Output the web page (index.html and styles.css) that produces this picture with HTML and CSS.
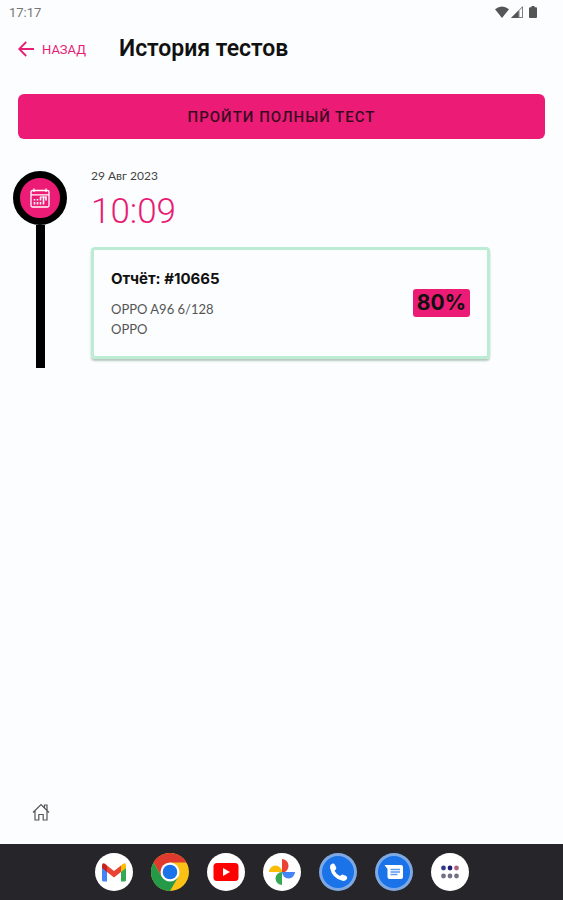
FILE: index.html
```
<!DOCTYPE html>
<html lang="ru">
<head>
  <meta charset="UTF-8" />
  <meta name="viewport" content="width=device-width, initial-scale=1" />
  <title>История тестов</title>
  <link rel="stylesheet" href="styles.css">
</head>
<body>

  <!-- Status bar -->
  <div class="status-bar">
    <span>17:17</span>
    <div class="status-icons">
      <svg width="14" height="12" viewBox="0 0 14 12"><path d="M0 3.2Q7-2.4 14 3.2L7 12z" fill="#555"/></svg>
      <svg width="12" height="12" viewBox="0 0 12 12"><path d="M0 12L12 0v12z" fill="#aaa"/><path d="M0 12L7.500 4.500V12z" fill="#555"/><path d="M8 11.500V4.500l3.500-3.700v10.700z" fill="#fbfcfe" stroke="#666" stroke-width=".8"/></svg>
      <svg class="battery" width="8" height="12" viewBox="0 0 8 12"><path d="M2.500 0h3v1.200H7q1 0 1 1V11q0 1-1 1H1q-1 0-1-1V2.200q0-1 1-1h1.500z" fill="#555"/></svg>
    </div>
  </div>

  <header class="header">
    <a class="back" href="#">
      <svg width="16" height="16" viewBox="0 0 16 16" fill="none" stroke="#e81c74" stroke-width="1.800"><path d="M16 8H1.500M8.200 1L1.200 8l7 7"/></svg>
      НАЗАД
    </a>
    <h1>История тестов</h1>
  </header>

  <main class="content">
    <button class="full-test" type="button">ПРОЙТИ ПОЛНЫЙ ТЕСТ</button>

    <!-- Timeline -->
    <section class="entry">
      <div class="marker">
        <div class="circle">
          <svg width="20" height="20" viewBox="0 0 20 20" fill="none" stroke="#fff" stroke-width="1.300">
            <rect x="1" y="2.500" width="18" height="16.500" rx="1.500"/>
            <path d="M1 6.800h18M4 .5v3.500M16 .5v3.500"/>
            <path d="M4.500 11v1.600M4.500 14v2.400M7.500 11v1.600M7.500 14v2.400M10.500 9v3.600M10.500 14v2.400M13.500 8.500v8M16 8.500v4" stroke-width="1.600"/>
            <path d="M10 9h6.500" stroke-width="1"/>
          </svg>
        </div>
        <div class="line"></div>
      </div>
      <div class="details">
        <p class="date">29 Авг 2023</p>
        <p class="time">10:09</p>
        <article class="card">
          <div>
            <h2>Отчёт: #10665</h2>
            <p>OPPO A96 6/128</p>
            <p>OPPO</p>
          </div>
          <span class="score">80%</span>
        </article>
      </div>
    </section>
  </main>

  <nav class="tabs">
    <a href="#" aria-label="Главная">
      <svg width="18" height="18" viewBox="0 0 18 18" fill="none" stroke="#555" stroke-width="1.200"><path d="M1 9.500L9 1.500l8 8M12.500 4.800V2h2.500v5.200M3 8v9h3.800v-5.500h4.400V17H15V8"/></svg>
    </a>
  </nav>

  <!-- App dock -->
  <footer class="dock">
    <button type="button" aria-label="Gmail">
      <svg viewBox="0 0 38 38">
        <circle cx="19" cy="19" r="19" fill="#fff"/>
        <path d="M7 13v14q0 1.500 1.500 1.500H12V16z" fill="#4285f4"/>
        <path d="M31 13v14q0 1.500-1.500 1.500H26V16z" fill="#34a853"/>
        <path d="M26 12.500l2-1.700q3-1.500 3 2V15l-5 4z" fill="#fbbc04"/>
        <path d="M7 15v-2.200q0-3.500 3-2l2 1.700V19z" fill="#c5221f"/>
        <path d="M12 12.500l7 5.500 7-5.500V19l-7 5.500L12 19z" fill="#ea4335"/>
      </svg>
    </button>
    <button type="button" aria-label="Chrome">
      <svg viewBox="0 0 38 38">
        <circle cx="19" cy="19" r="19" fill="#fbc116"/>
        <path d="M2.550 9.500A19 19 0 0 1 35.450 9.500H19L10.770 23.750z" fill="#df3a2d"/>
        <path d="M2.550 9.500A19 19 0 0 0 19 38l8.230-14.250H10.770z" fill="#249a48"/>
        <circle cx="19" cy="19" r="9.500" fill="#fff"/>
        <circle cx="19" cy="19" r="7.300" fill="#1a73e8"/>
      </svg>
    </button>
    <button type="button" aria-label="YouTube">
      <svg viewBox="0 0 38 38">
        <circle cx="19" cy="19" r="19" fill="#fff"/>
        <rect x="6.500" y="10" width="25" height="18" rx="3.500" fill="#f00"/>
        <path d="M16 15v8l7-4z" fill="#fff"/>
      </svg>
    </button>
    <button type="button" aria-label="Google Фото">
      <svg viewBox="0 0 38 38">
        <circle cx="19" cy="19" r="19" fill="#fff"/>
        <path d="M19 19V6a6.500 6.500 0 0 1 6.500 6.500q0 4-3.500 6.500z" fill="#ea4335"/>
        <path d="M19 19h13a6.500 6.500 0 0 1-13 0z" fill="#4285f4"/>
        <path d="M19 19v13a6.500 6.500 0 0 1 0-13z" fill="#34a853"/>
        <path d="M19 19H6a6.500 6.500 0 0 1 13 0z" fill="#fbbc04"/>
      </svg>
    </button>
    <button type="button" aria-label="Телефон">
      <svg viewBox="0 0 38 38">
        <circle cx="19" cy="19" r="19" fill="#7fa9e2"/>
        <circle cx="19" cy="19" r="16" fill="#1a73e8"/>
        <path d="M12 11.500q2.500-2 4 .5l1.300 2.800q.4 1.400-1.800 3 2 4 5.500 5.300 1.800-2 3.200-1.400l3 1.300q1.800 1.300.3 3.500-1.500 1.800-4 1.300-10.500-2.500-12.500-13-.2-2.200 1-3.300z" fill="#fff"/>
      </svg>
    </button>
    <button type="button" aria-label="Сообщения">
      <svg viewBox="0 0 38 38">
        <circle cx="19" cy="19" r="19" fill="#7fa9e2"/>
        <circle cx="19" cy="19" r="16" fill="#1a73e8"/>
        <path d="M9.500 12H26q2 0 2 2v10q0 2-2 2H14.500q-2 0-2-2v-8z" fill="#fff"/>
        <path d="M15.500 16.500h9.500M15.500 19h9.500M15.500 21.500h7" stroke="#5b9bef" stroke-width="1.300"/>
      </svg>
    </button>
    <button type="button" aria-label="Все приложения">
      <svg viewBox="0 0 38 38">
        <circle cx="19" cy="19" r="19" fill="#fff"/>
        <g fill="#757083">
          <circle cx="12.500" cy="15" r="2.400" fill="#343a8b"/>
          <circle cx="19" cy="15" r="2.400" fill="#211b78"/>
          <circle cx="25.500" cy="15" r="2.400" fill="#aa6380"/>
          <circle cx="12.500" cy="23" r="2.400"/>
          <circle cx="19" cy="23" r="2.400"/>
          <circle cx="25.500" cy="23" r="2.400"/>
        </g>
      </svg>
    </button>
  </footer>

</body>
</html>
```
FILE: styles.css
```
/* Base */
* {
  box-sizing: border-box;
}
body {
  margin: 0;
  min-height: 100vh;
  display: flex;
  flex-direction: column;
  font-family: Roboto, sans-serif;
  background: #fbfdfe;
  color: #111;
}

h1, h2, p {
  margin: 0;
}

svg {
  display: block;
}

/* Status bar */
.status-bar {
  display: flex;
  justify-content: space-between;
  align-items: center;
  height: 24px;
  padding: 0 26px 0 9px;
  font-size: 13px;
  color: #777;
}

.status-icons {
  display: flex;
  gap: 2px;
}

.battery {
  margin-left: 4px;
}

/* Header */
.header {
  display: flex;
  align-items: center;
  gap: 33px;
  height: 50px;
  padding: 0 18px;
}

.back {
  display: flex;
  align-items: center;
  gap: 8px;
  font-size: 13px;
  color: #e81c74;
  text-decoration: none;
}

h1 {
  font-size: 23px;
  font-weight: 600;
  line-height: 28px;
}

.content {
  flex: 1;
  padding: 20px 18px;
}

.full-test {
  width: 100%;
  height: 45px;
  border: none;
  border-radius: 6px;
  background: #ec1c76;
  color: #3a0a22;
  font-family: inherit;
  font-size: 15px;
  font-weight: 500;
  letter-spacing: 1px;
  cursor: pointer;
}

/* Timeline */
.entry {
  display: flex;
  gap: 24px;
  margin: 28px 55px 0 -5px;
}

.marker {
  display: flex;
  flex-direction: column;
  align-items: center;
  padding-top: 4px;
  margin-bottom: -9px;
}

.circle {
  display: flex;
  align-items: center;
  justify-content: center;
  width: 54px;
  height: 54px;
  border: 7px solid #000;
  border-radius: 50%;
  background: #ec1c76;
}

.line {
  flex: 1;
  width: 9px;
  background: #000;
}

.details {
  flex: 1;
}

.date {
  font-family: Lato, sans-serif;
  font-size: 12px;
  line-height: 18px;
  color: #444;
}

.time {
  margin-bottom: 8px;
  font-size: 35px;
  font-weight: 300;
  line-height: 54px;
  color: #e81c74;
}

.card {
  display: flex;
  justify-content: space-between;
  align-items: center;
  padding: 17px;
  border: 3px solid #bdecd5;
  border-radius: 4px;
  box-shadow: 0 2px 2px #b5c8be;
}

.card h2 {
  margin-bottom: 9px;
  font-family: Inter, sans-serif;
  font-size: 15px;
  font-weight: 700;
  line-height: 23px;
}

.card p {
  font-family: Lato, sans-serif;
  font-size: 13px;
  line-height: 20px;
  color: #555;
}

.score {
  padding: 0 4px;
  border-radius: 3px;
  background: #ec1c76;
  font-family: Inter, sans-serif;
  font-size: 21px;
  font-weight: 700;
  line-height: 28px;
}

/* Bottom */
.tabs {
  display: flex;
  padding: 0 32px 23px;
}

.dock {
  display: flex;
  justify-content: center;
  align-items: center;
  gap: 18px;
  height: 56px;
  background: #26252a;
}

.dock button {
  width: 38px;
  height: 38px;
  padding: 0;
  border: none;
  background: none;
  cursor: pointer;
}
```
